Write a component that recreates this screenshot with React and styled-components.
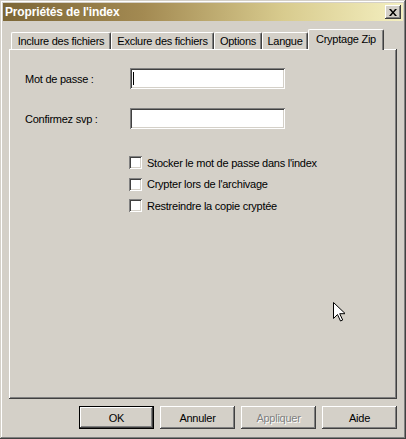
import React from 'react';
import styled, { createGlobalStyle, css } from 'styled-components';

const GlobalStyle = createGlobalStyle`
  html, body {
    margin: 0;
    padding: 0;
    background: #d4d0c8;
  }
  body {
    font-family: 'Liberation Sans', Arial, sans-serif;
    font-size: 11px;
    color: #000;
  }
`;

const raised = css`
  box-shadow: inset -1px -1px #404040, inset 1px 1px #ffffff,
    inset -2px -2px #808080, inset 2px 2px #d4d0c8;
`;

const sunken = css`
  box-shadow: inset 1px 1px #808080, inset -1px -1px #ffffff,
    inset 2px 2px #404040, inset -2px -2px #d4d0c8;
`;

const tabs = [
  { label: 'Inclure des fichiers', width: 100 },
  { label: 'Exclure des fichiers', width: 103 },
  { label: 'Options', width: 48 },
  { label: 'Langue', width: 46 },
  { label: 'Cryptage Zip', width: 76, active: true },
];

const options = [
  "Stocker le mot de passe dans l'index",
  "Crypter lors de l'archivage",
  'Restreindre la copie cryptée',
];

const App = () => {
  return (
    <>
      <GlobalStyle />
      <Window>
        <TitleBar>
          <Title>Propriétés de l'index</Title>
          <CloseButton>
            <svg width='8' height='7' viewBox='0 0 8 7'>
              <path d='M0 0h2l2 2.5L6 0h2L5 3.5 8 7H6L4 4.5 2 7H0l3-3.5z' fill='#000' />
            </svg>
          </CloseButton>
        </TitleBar>
        <Body>
          <TabStrip>
            {tabs.map((t) => (
              <Tab key={t.label} $width={t.width} $active={t.active}>
                {t.label}
              </Tab>
            ))}
          </TabStrip>
          <Panel>
            <FieldRow>
              <Label>Mot de passe :</Label>
              <TextBox>
                <Caret />
              </TextBox>
            </FieldRow>
            <FieldRow>
              <Label>Confirmez svp :</Label>
              <TextBox />
            </FieldRow>
            <CheckList>
              {options.map((o) => (
                <CheckRow key={o}>
                  <CheckBox />
                  <span>{o}</span>
                </CheckRow>
              ))}
            </CheckList>
            <Pointer width='12' height='20' viewBox='0 0 12 20'>
              <path
                d='M0.5 0.5v16l4-4 3 6.5 2.2-1-3-6.3h5.6z'
                fill='#fff'
                stroke='#000'
                strokeWidth='1'
              />
            </Pointer>
          </Panel>
          <Footer>
            <Button $default>OK</Button>
            <Button>Annuler</Button>
            <Button disabled>Appliquer</Button>
            <Button>Aide</Button>
          </Footer>
        </Body>
      </Window>
    </>
  );
};

const Window = styled.div`
  width: 406px;
  height: 439px;
  box-sizing: border-box;
  padding: 3px;
  display: flex;
  flex-direction: column;
  background: #d4d0c8;
  box-shadow: inset -1px -1px #404040, inset 1px 1px #d4d0c8,
    inset -2px -2px #808080, inset 2px 2px #ffffff;
`;

const TitleBar = styled.div`
  height: 18px;
  display: flex;
  align-items: center;
  justify-content: space-between;
  padding: 0 2px;
  background: linear-gradient(to right, #7c6636 0%, #a38a52 35%, #d8cb8e 70%, #f4efc0 100%);
`;

const Title = styled.span`
  color: #fff;
  font-weight: bold;
  font-size: 12px;
  letter-spacing: -0.15px;
`;

const CloseButton = styled.div`
  width: 16px;
  height: 14px;
  box-sizing: border-box;
  display: flex;
  align-items: center;
  justify-content: center;
  background: #d4d0c8;
  ${raised}
`;

const Body = styled.div`
  flex: 1;
  display: flex;
  flex-direction: column;
  padding: 8px 6px 0 6px;
`;

const TabStrip = styled.div`
  height: 20px;
  display: flex;
  align-items: flex-start;
  padding-left: 2px;
`;

const Tab = styled.div`
  width: ${(p) => p.$width}px;
  height: ${(p) => (p.$active ? 21 : 17)}px;
  margin-top: ${(p) => (p.$active ? 0 : 3)}px;
  box-sizing: border-box;
  display: flex;
  align-items: center;
  justify-content: center;
  padding-bottom: ${(p) => (p.$active ? 3 : 0)}px;
  white-space: nowrap;
  letter-spacing: -0.25px;
  background: #d4d0c8;
  border-top: 1px solid #fff;
  border-left: 1px solid #fff;
  border-right: 1px solid #404040;
  border-radius: 2px 2px 0 0;
  box-shadow: inset -1px 0 #808080;
  position: relative;
  z-index: ${(p) => (p.$active ? 1 : 0)};
`;

const Panel = styled.div`
  position: relative;
  height: 350px;
  box-sizing: border-box;
  padding: 19px 14px 0 16px;
  display: flex;
  flex-direction: column;
  gap: 19px;
  box-shadow: inset -1px -1px #404040, inset 1px 1px #ffffff,
    inset -2px -2px #808080;
`;

const FieldRow = styled.div`
  display: flex;
  align-items: center;
`;

const Label = styled.span`
  width: 105px;
  letter-spacing: -0.25px;
`;

const TextBox = styled.div`
  width: 155px;
  height: 21px;
  box-sizing: border-box;
  background: #fff;
  padding: 3px 3px;
  display: flex;
  align-items: center;
  ${sunken}
`;

const Caret = styled.div`
  width: 1px;
  height: 13px;
  background: #000;
`;

const CheckList = styled.div`
  display: flex;
  flex-direction: column;
  gap: 8.5px;
  padding-left: 104px;
  margin-top: 8px;
`;

const CheckRow = styled.label`
  display: flex;
  align-items: center;
  gap: 5px;
  height: 13px;
  letter-spacing: -0.25px;
  white-space: nowrap;
`;

const CheckBox = styled.div`
  width: 13px;
  height: 13px;
  flex-shrink: 0;
  box-sizing: border-box;
  background: #fff;
  ${sunken}
`;

const Pointer = styled.svg`
  position: absolute;
  left: 324px;
  top: 253px;
`;

const Footer = styled.div`
  display: flex;
  justify-content: flex-end;
  gap: 6px;
  padding-top: 7px;
`;

const Button = styled.button`
  width: 75px;
  height: 23px;
  box-sizing: border-box;
  font-family: 'Liberation Sans', Arial, sans-serif;
  font-size: 11px;
  letter-spacing: -0.25px;
  color: #000;
  background: #d4d0c8;
  border: none;
  padding: 0;
  ${raised}
  ${(p) =>
    p.$default &&
    css`
      border: 1px solid #000;
    `}
  &:disabled {
    color: #808080;
    text-shadow: 1px 1px #fff;
  }
`;

export default App;
